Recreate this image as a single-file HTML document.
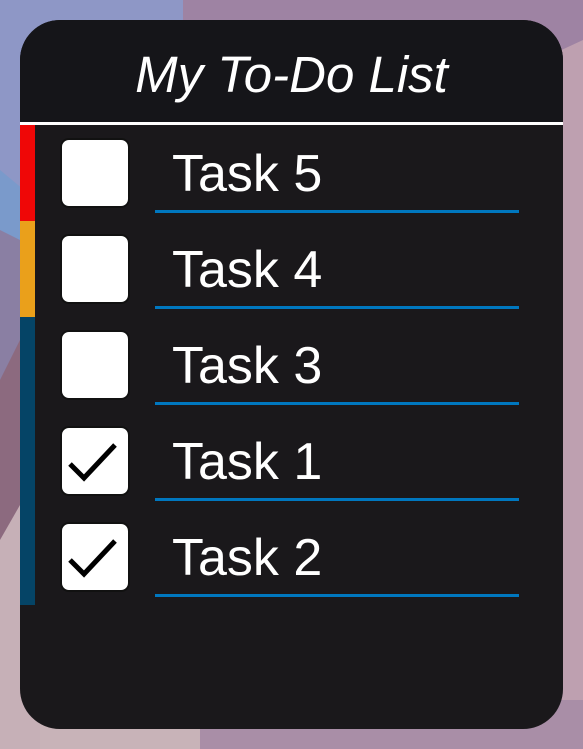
<!DOCTYPE html>
<html><head><meta charset="utf-8"><style>
html,body{margin:0;padding:0;width:583px;height:749px;overflow:hidden;font-family:"Liberation Sans",sans-serif}
.bg{position:absolute;inset:0;width:583px;height:749px}
.card{position:absolute;left:20px;top:20px;width:543px;height:709px;border-radius:40px;background:#1a181b;overflow:hidden}
.title{position:absolute;left:0;top:0;width:543px;height:102px;background:#151519;color:#fff;font-style:italic;font-size:51px;text-align:center;line-height:110px}
.hr{position:absolute;left:0;top:102px;width:543px;height:3px;background:#fff}
.bar{position:absolute;left:0;width:15px}
.row{position:absolute;left:0;width:543px;height:96px}
.cb{position:absolute;left:40px;top:13px;width:66px;height:66px;background:#fff;border:2px solid #111;border-radius:9px}
.t{position:absolute;left:152px;top:16px;color:#fff;font-size:52px;line-height:66px}
.u{position:absolute;left:135px;top:85px;width:364px;height:3px;background:#0077bf}
</style></head><body>
<svg class="bg" viewBox="0 0 583 749">
<rect width="583" height="749" fill="#a58aa6"/>
<polygon points="0,0 183,0 183,170 0,230" fill="#8e97c6"/>
<polygon points="183,0 583,0 583,75 183,120" fill="#9e83a3"/>
<polygon points="0,170 60,220 0,260" fill="#7a9acb"/>
<polygon points="0,230 60,260 0,400" fill="#8a7fa3"/>
<polygon points="0,380 40,300 40,500 0,560" fill="#8c6a7f"/>
<polygon points="0,540 40,470 40,749 0,749" fill="#c6b0b7"/>
<polygon points="40,600 200,600 200,749 40,749" fill="#c8b3b8"/>
<polygon points="200,600 583,600 583,749 200,749" fill="#a98ea7"/>
<polygon points="540,60 583,40 583,700 540,700" fill="#bea0b0"/>
</svg>
<div class="card">
<div class="title">My To-Do List</div>
<div class="hr"></div>
<div class="bar" style="top:105px;height:96px;background:#ef0707"></div>
<div class="bar" style="top:201px;height:96px;background:#eaa01b"></div>
<div class="bar" style="top:297px;height:288px;background:#054466"></div>
<div class="row" style="top:105px"><div class="cb"></div><div class="t">Task 5</div><div class="u"></div></div>
<div class="row" style="top:201px"><div class="cb"></div><div class="t">Task 4</div><div class="u"></div></div>
<div class="row" style="top:297px"><div class="cb"></div><div class="t">Task 3</div><div class="u"></div></div>
<div class="row" style="top:393px"><div class="cb"><svg width="66" height="66" viewBox="0 0 66 66"><path d="M8 36 L22 50 L53 17" fill="none" stroke="#000" stroke-width="5"/></svg></div><div class="t">Task 1</div><div class="u"></div></div>
<div class="row" style="top:489px"><div class="cb"><svg width="66" height="66" viewBox="0 0 66 66"><path d="M8 36 L22 50 L53 17" fill="none" stroke="#000" stroke-width="5"/></svg></div><div class="t">Task 2</div><div class="u"></div></div>
</div>
</body></html>
